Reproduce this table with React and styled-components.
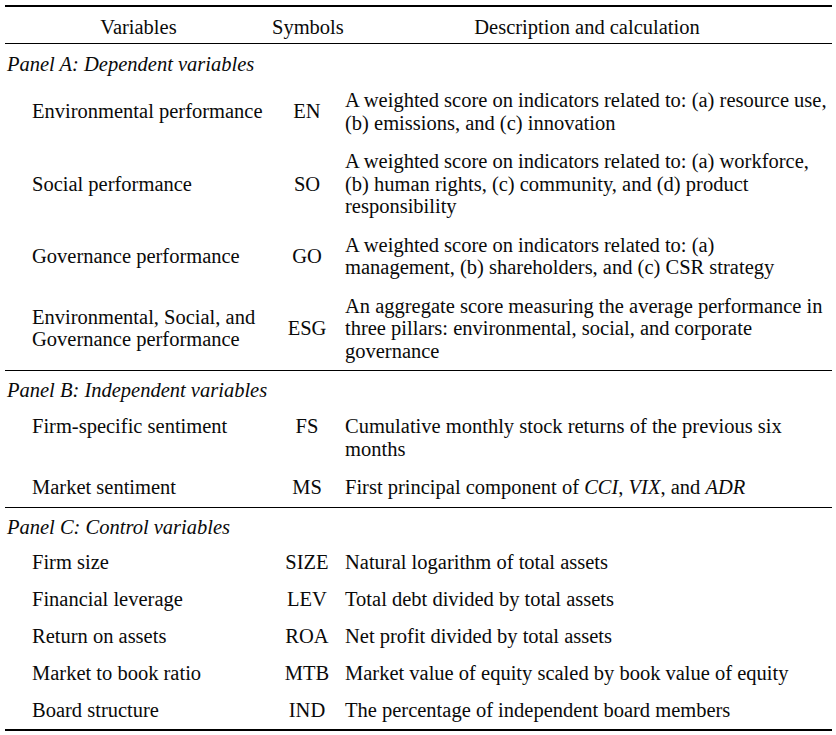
import React from "react";
import styled, { createGlobalStyle } from "styled-components";

const Global = createGlobalStyle`
  html, body { margin: 0; padding: 0; background: #fff; }
  body { font-family: "Liberation Serif", "Times New Roman", serif; color: #0a0a0a; }
`;

const Table = styled.div`
  width: 827px;
  margin: 5px 0 0 5px;
  border-top: 2px solid #000;
  border-bottom: 2px solid #000;
  font-size: 20.5px;
  line-height: 22.5px;
`;

const Row = styled.div`
  display: grid;
  grid-template-columns: 267px 70px 1fr;
  align-items: ${(p) => (p.$top ? "start" : "center")};
  padding: ${(p) => (p.$pad != null ? p.$pad : 8)}px 0;
`;

const HeaderRow = styled.div`
  display: grid;
  grid-template-columns: 267px 70px 1fr;
  align-items: center;
  height: 37px;
  padding-top: 4px;
  box-sizing: border-box;
  border-bottom: 1px solid #000;
`;

const HeadCell = styled.div`
  text-align: center;
  white-space: nowrap;
`;

const PanelRow = styled.div`
  height: 37px;
  display: flex;
  align-items: center;
  padding: 3px 0 0 2px;
  box-sizing: border-box;
  font-style: italic;
  border-top: ${(p) => (p.$first ? "none" : "1px solid #000")};
`;

const Label = styled.div`
  padding-left: 27px;
  white-space: nowrap;
`;

const Symbol = styled.div`
  text-align: center;
  white-space: nowrap;
`;

const Desc = styled.div`
  padding-left: 3px;
  white-space: nowrap;
`;

const Line = styled.div``;

const Em = styled.i``;

const panels = [
  {
    title: "Panel A: Dependent variables",
    rows: [
      { label: ["Environmental performance"], sym: "EN", desc: ["A weighted score on indicators related to: (a) resource use,", "(b) emissions, and (c) innovation"] },
      { label: ["Social performance"], sym: "SO", desc: ["A weighted score on indicators related to: (a) workforce,", "(b) human rights, (c) community, and (d) product", "responsibility"] },
      { label: ["Governance performance"], sym: "GO", desc: ["A weighted score on indicators related to: (a)", "management, (b) shareholders, and (c) CSR strategy"] },
      { label: ["Environmental, Social, and", "Governance performance"], sym: "ESG", desc: ["An aggregate score measuring the average performance in", "three pillars: environmental, social, and corporate", "governance"] },
    ],
  },
  {
    title: "Panel B: Independent variables",
    rows: [
      { label: ["Firm-specific sentiment"], sym: "FS", top: true, desc: ["Cumulative monthly stock returns of the previous six", "months"] },
      {
        label: ["Market sentiment"],
        sym: "MS",
        desc: [
          <>First principal component of <Em>CCI</Em>, <Em>VIX</Em>, and <Em>ADR</Em></>,
        ],
      },
    ],
  },
  {
    title: "Panel C: Control variables",
    pad: 7.25,
    rows: [
      { label: ["Firm size"], sym: "SIZE", desc: ["Natural logarithm of total assets"] },
      { label: ["Financial leverage"], sym: "LEV", desc: ["Total debt divided by total assets"] },
      { label: ["Return on assets"], sym: "ROA", desc: ["Net profit divided by total assets"] },
      { label: ["Market to book ratio"], sym: "MTB", desc: ["Market value of equity scaled by book value of equity"] },
      { label: ["Board structure"], sym: "IND", desc: ["The percentage of independent board members"] },
    ],
  },
];

export default function App() {
  return (
    <>
      <Global />
      <Table>
        <HeaderRow>
          <HeadCell>Variables</HeadCell>
          <HeadCell>Symbols</HeadCell>
          <HeadCell>Description and calculation</HeadCell>
        </HeaderRow>
        {panels.map((p, pi) => (
          <React.Fragment key={pi}>
            <PanelRow $first={pi === 0}>{p.title}</PanelRow>
            {p.rows.map((r, ri) => (
              <Row key={ri} $top={r.top} $pad={p.pad}>
                <Label>
                  {r.label.map((l, i) => (
                    <Line key={i}>{l}</Line>
                  ))}
                </Label>
                <Symbol>{r.sym}</Symbol>
                <Desc>
                  {r.desc.map((d, i) => (
                    <Line key={i}>{d}</Line>
                  ))}
                </Desc>
              </Row>
            ))}
          </React.Fragment>
        ))}
      </Table>
    </>
  );
}
